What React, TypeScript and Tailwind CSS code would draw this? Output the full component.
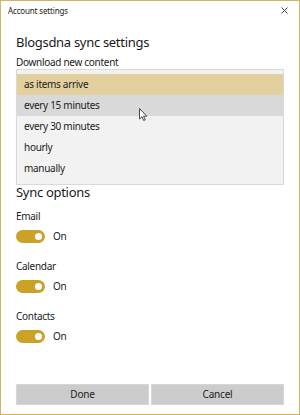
import React from "react";

const items = ["as items arrive", "every 15 minutes", "every 30 minutes", "hourly", "manually"];

function Toggle({ last }: { last?: boolean }) {
  return (
    <div className={"flex items-center gap-[8px] mt-[7px] " + (last ? "" : "mb-[17px]")}>
      <div className="w-[29px] h-[13px] rounded-full bg-[#c9a227] flex items-center justify-end pr-[3px]">
        <div className="w-[7px] h-[7px] rounded-full bg-white" />
      </div>
      <span className="text-[10px] leading-[13px] tracking-[-0.2px] text-[#222]">On</span>
    </div>
  );
}

function Label({ children }: { children: React.ReactNode }) {
  return <div className="text-[10px] leading-[13px] tracking-[-0.3px] text-[#222]">{children}</div>;
}

export default function App() {
  return (
    <div
      className="w-[300px] h-[415px] bg-white border border-[#d6b35e] flex flex-col relative text-[#1a1a1a]"
      style={{ fontFamily: '"Noto Sans", "Open Sans", sans-serif' }}
    >
      <div className="h-[19px] flex items-center justify-between pl-[7px] pr-[11px]">
        <span className="text-[8px] leading-[10px] text-[#222] tracking-[-0.15px]">Account settings</span>
        <svg width="7" height="7" viewBox="0 0 7 7">
          <path d="M0.5 0.5 L6.5 6.5 M6.5 0.5 L0.5 6.5" stroke="#444" strokeWidth="1" />
        </svg>
      </div>
      <div className="px-[15px]">
        <div className="text-[13px] leading-[16px] mt-[14px] tracking-[-0.3px]">Blogsdna sync settings</div>
        <div className="text-[10px] leading-[13px] mt-[6px] tracking-[-0.3px] text-[#222]">Download new content</div>
        <div className="mt-0 w-[268px] h-[116px] bg-[#f2f2f2] border border-[#d9d9d9] pt-[4px] relative">
          {items.map((t, i) => (
            <div
              key={t}
              className={
                "h-[21px] flex items-center pl-[7px] text-[10px] tracking-[-0.3px] text-[#222] " +
                (i === 0 ? "bg-[#e2d09f]" : i === 1 ? "bg-[#d9d9d9]" : "")
              }
            >
              {t}
            </div>
          ))}
          <svg width="9" height="14" viewBox="0 0 9 14" className="absolute left-[122px] top-[38px]">
            <path d="M0.5 0.5 L0.5 11 L3 8.7 L4.7 12.5 L6.2 11.8 L4.6 8.2 L7.8 8.2 Z" fill="white" stroke="#333" strokeWidth="0.9" />
          </svg>
        </div>
        <div className="text-[13px] leading-[14px] mt-0 tracking-[-0.3px]">Sync options</div>
        <div className="mt-[11px]">
          <Label>Email</Label>
          <Toggle />
          <Label>Calendar</Label>
          <Toggle />
          <Label>Contacts</Label>
          <Toggle last />
        </div>
      </div>
      <div className="mt-auto mb-[9px] px-[15px] flex gap-[2px]">
        <div className="w-[133px] h-[21px] bg-[#cccccc] border border-[#d6d6d6] flex items-center justify-center text-[10px] tracking-[-0.2px] text-[#222]">Done</div>
        <div className="w-[133px] h-[21px] bg-[#cccccc] border border-[#d6d6d6] flex items-center justify-center text-[10px] tracking-[-0.2px] text-[#222]">Cancel</div>
      </div>
    </div>
  );
}
